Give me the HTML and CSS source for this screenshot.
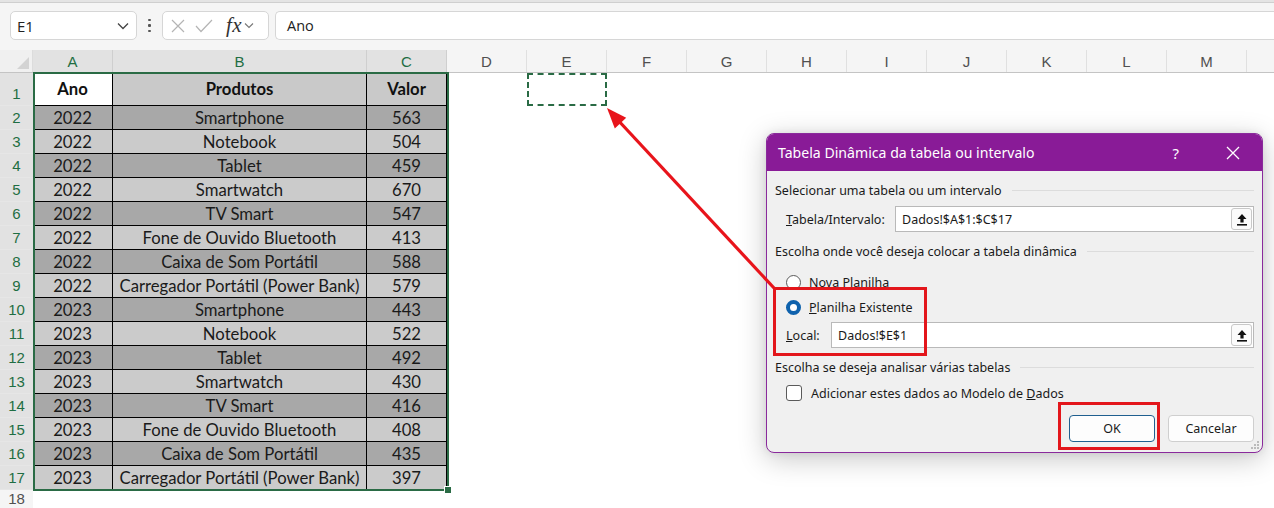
FILE: index.html
```html
<!DOCTYPE html>
<html lang="pt">
<head>
<meta charset="utf-8">
<title>Excel - Tabela Dinâmica</title>
<link rel="stylesheet" href="styles.css">
</head>
<body>
<div class="app">
  <div class="ribbon-edge"></div>
  <div class="formula-bar">
    <div class="name-box">
      <span class="name-val">E1</span>
      <svg class="chev" width="12" height="8" viewBox="0 0 12 8"><polyline points="1,1.5 6,6.5 11,1.5" fill="none" stroke="#444" stroke-width="1.3"/></svg>
    </div>
    <div class="vdots"><span></span><span></span><span></span></div>
    <div class="fx-box">
      <svg width="16" height="16" viewBox="0 0 16 16"><path d="M2 2 L14 14 M14 2 L2 14" stroke="#b4b4b4" stroke-width="1.2" fill="none"/></svg>
      <svg width="18" height="16" viewBox="0 0 18 16"><polyline points="1,8 6,13.5 17,2" stroke="#b4b4b4" stroke-width="1.2" fill="none"/></svg>
      <span class="fx">fx</span>
      <svg width="10" height="7" viewBox="0 0 10 7"><polyline points="1,1.5 5,5.5 9,1.5" fill="none" stroke="#777" stroke-width="1.1"/></svg>
    </div>
    <div class="formula-input">Ano</div>
  </div>

  <div class="sheet">
    <div class="row head-row">
      <div class="corner"><svg width="14" height="14" viewBox="0 0 14 14"><polygon points="13,1 13,13 1,13" fill="#d3d3d3"/></svg></div>
      <div class="ch sel">A</div><div class="ch sel">B</div><div class="ch sel">C</div>
      <div class="ch">D</div><div class="ch">E</div><div class="ch">F</div><div class="ch">G</div><div class="ch">H</div><div class="ch">I</div><div class="ch">J</div><div class="ch">K</div><div class="ch">L</div><div class="ch">M</div><div class="ch"></div>
    </div>

    <div class="row r1">
      <div class="rh sel">1</div>
      <div class="c hw b">Ano</div><div class="c hg b">Produtos</div><div class="c hg b">Valor</div>
      <div class="e"></div><div class="e marquee"></div>
    </div>
    <div class="row"><div class="rh sel">2</div><div class="c d">2022</div><div class="c d">Smartphone</div><div class="c d">563</div></div>
    <div class="row"><div class="rh sel">3</div><div class="c l">2022</div><div class="c l">Notebook</div><div class="c l">504</div></div>
    <div class="row"><div class="rh sel">4</div><div class="c d">2022</div><div class="c d">Tablet</div><div class="c d">459</div></div>
    <div class="row"><div class="rh sel">5</div><div class="c l">2022</div><div class="c l">Smartwatch</div><div class="c l">670</div></div>
    <div class="row"><div class="rh sel">6</div><div class="c d">2022</div><div class="c d">TV Smart</div><div class="c d">547</div></div>
    <div class="row"><div class="rh sel">7</div><div class="c l">2022</div><div class="c l">Fone de Ouvido Bluetooth</div><div class="c l">413</div></div>
    <div class="row"><div class="rh sel">8</div><div class="c d">2022</div><div class="c d">Caixa de Som Portátil</div><div class="c d">588</div></div>
    <div class="row"><div class="rh sel">9</div><div class="c l">2022</div><div class="c l">Carregador Portátil (Power Bank)</div><div class="c l">579</div></div>
    <div class="row"><div class="rh sel">10</div><div class="c d">2023</div><div class="c d">Smartphone</div><div class="c d">443</div></div>
    <div class="row"><div class="rh sel">11</div><div class="c l">2023</div><div class="c l">Notebook</div><div class="c l">522</div></div>
    <div class="row"><div class="rh sel">12</div><div class="c d">2023</div><div class="c d">Tablet</div><div class="c d">492</div></div>
    <div class="row"><div class="rh sel">13</div><div class="c l">2023</div><div class="c l">Smartwatch</div><div class="c l">430</div></div>
    <div class="row"><div class="rh sel">14</div><div class="c d">2023</div><div class="c d">TV Smart</div><div class="c d">416</div></div>
    <div class="row"><div class="rh sel">15</div><div class="c l">2023</div><div class="c l">Fone de Ouvido Bluetooth</div><div class="c l">408</div></div>
    <div class="row"><div class="rh sel">16</div><div class="c d">2023</div><div class="c d">Caixa de Som Portátil</div><div class="c d">435</div></div>
    <div class="row"><div class="rh sel">17</div><div class="c l">2023</div><div class="c l">Carregador Portátil (Power Bank)</div><div class="c l">397</div></div>
    <div class="row r18"><div class="rh">18</div></div>

    <div class="selection"><div class="handle"></div></div>
  </div>

  <div class="dialog">
    <div class="dlg-title">
      <span class="dlg-title-text">Tabela Dinâmica da tabela ou intervalo</span>
      <span class="dlg-help">?</span>
      <svg class="dlg-close" width="14" height="14" viewBox="0 0 14 14"><path d="M1 1 L13 13 M13 1 L1 13" stroke="#fff" stroke-width="1.3" fill="none"/></svg>
    </div>
    <div class="dlg-body">
      <div class="group-label"><span>Selecionar uma tabela ou um intervalo</span><i></i></div>
      <div class="field-row">
        <span class="field-label"><u>T</u>abela/Intervalo:</span>
        <div class="input w-range"><span>Dados!$A$1:$C$17</span>
          <span class="pick"><svg width="12" height="13" viewBox="0 0 12 13"><path d="M6 1 L10.5 6 H7.6 V9.5 H4.4 V6 H1.5 Z" fill="#111"/><rect x="1" y="11" width="10" height="1.6" fill="#111"/></svg></span>
        </div>
      </div>
      <div class="group-label g2"><span>Escolha onde você deseja colocar a tabela dinâmica</span><i></i></div>
      <div class="radio-row first"><span class="radio"></span><span>Nova Planilha</span></div>
      <div class="radio-row"><span class="radio on"></span><span><u>P</u>lanilha Existente</span></div>
      <div class="field-row local">
        <span class="field-label"><u>L</u>ocal:</span>
        <div class="input w-local"><span>Dados!$E$1</span>
          <span class="pick"><svg width="12" height="13" viewBox="0 0 12 13"><path d="M6 1 L10.5 6 H7.6 V9.5 H4.4 V6 H1.5 Z" fill="#111"/><rect x="1" y="11" width="10" height="1.6" fill="#111"/></svg></span>
        </div>
      </div>
      <div class="group-label g3"><span>Escolha se deseja analisar várias tabelas</span><i></i></div>
      <div class="check-row"><span class="checkbox"></span><span>Adicionar estes dados ao Modelo de <u>D</u>ados</span></div>
      <div class="buttons">
        <button class="btn primary">OK</button>
        <button class="btn">Cancelar</button>
      </div>
    </div>
    <svg class="grip" width="10" height="10" viewBox="0 0 10 10"><rect x="7" y="1" width="2" height="2" fill="#bbb"/><rect x="4" y="4" width="2" height="2" fill="#bbb"/><rect x="7" y="4" width="2" height="2" fill="#bbb"/><rect x="1" y="7" width="2" height="2" fill="#bbb"/><rect x="4" y="7" width="2" height="2" fill="#bbb"/><rect x="7" y="7" width="2" height="2" fill="#bbb"/></svg>
  </div>

  <svg class="arrow" width="1274" height="508" viewBox="0 0 1274 508">
    <line x1="774" y1="288" x2="616" y2="118" stroke="#e8141b" stroke-width="3.2"/>
    <polygon points="607,108 614.8,128.5 626.2,117.8" fill="#e8141b"/>
  </svg>
  <div class="hl hl-local"></div>
  <div class="hl hl-ok"></div>
</div>
</body>
</html>
```

FILE: styles.css
```css
* { box-sizing: border-box; }
html, body { margin: 0; padding: 0; }
body { width: 1274px; height: 508px; overflow: hidden; background: #fff; font-family: "Liberation Sans", Arial, sans-serif; }
.app { position: relative; width: 1274px; height: 508px; overflow: hidden; }

.ribbon-edge { height: 3px; background: #e4e4e4; border-bottom: 1px solid #cfcfcf; }
.formula-bar { height: 47px; background: #f5f5f5; display: flex; align-items: flex-start; padding: 8px 0 0 10px; }
.name-box { width: 127px; height: 29px; background: #fff; border: 1px solid #d6d6d6; border-radius: 5px; display: flex; align-items: center; justify-content: space-between; padding: 0 7px 0 6px; }
.name-val { font-family: "Open Sans", sans-serif; font-size: 15px; color: #222; }
.vdots { width: 25px; height: 29px; display: flex; flex-direction: column; align-items: center; justify-content: center; gap: 3px; }
.vdots span { width: 2.5px; height: 2.5px; background: #555; border-radius: 1px; }
.fx-box { width: 107px; height: 29px; background: #fff; border: 1px solid #d6d6d6; border-radius: 5px; display: flex; align-items: center; padding: 0 5px 0 7px; gap: 9px; }
.fx { font-family: "Liberation Serif", serif; font-style: italic; font-size: 21px; color: #333; margin-left: 4px; margin-right: -7px; letter-spacing: 0.5px; line-height: 1; }
.formula-input { flex: 1; margin-left: 6px; height: 29px; background: #fff; border: 1px solid #d6d6d6; border-right: none; border-radius: 5px 0 0 5px; font-family: "Open Sans", sans-serif; font-size: 14.5px; color: #222; padding: 4px 0 0 11px; }

.sheet { position: relative; }
.row { display: grid; grid-template-columns: 33px 80px 254px 80px 80px 80px 80px 80px 80px 80px 80px 80px 80px 80px 80px; height: 24px; }
.head-row { height: 23px; background: #f5f5f5; border-bottom: 1px solid #c4c4c4; }
.r1 { height: 33px; }
.corner { display: flex; align-items: flex-end; justify-content: flex-end; padding: 0 2px 2px 0; background: #f0f0f0; border-right: 1px solid #dcdcdc; }
.ch { display: flex; align-items: center; justify-content: center; font-family: "Liberation Sans", sans-serif; font-size: 15px; color: #505050; border-right: 1px solid #e0e0e0; }
.ch.sel { background: #e2e2e2; color: #1f6e43; border-right-color: #cfcfcf; }
.rh { display: flex; align-items: center; justify-content: center; font-family: "Liberation Sans", sans-serif; font-size: 15px; color: #505050; background: #f5f5f5; border-bottom: 1px solid #e6e6e6; }
.r1 .rh { align-items: flex-end; padding-bottom: 3px; }
.r18 .rh { align-items: flex-start; padding-top: 1px; line-height: 16px; }
.rh.sel { background: #e2e2e2; color: #1f6e43; }
.c { display: flex; align-items: center; justify-content: center; font-family: "Lato", sans-serif; font-size: 16.7px; color: #1a1a1a; border-right: 1px solid #000; border-bottom: 1px solid #000; white-space: nowrap; }
.c.b { font-weight: 700; color: #111; }
.hw { background: #fff; }
.hg { background: #c9c9c9; }
.d { background: #a8a8a8; }
.l { background: #cbcbcb; }
.marquee { border: 2px dashed #2a6b45; }

.selection { position: absolute; left: 33px; top: 22px; width: 416px; height: 419px; border: 2px solid #2a6b45; pointer-events: none; }
.handle { position: absolute; right: -5px; bottom: -5px; width: 6px; height: 6px; background: #2a6b45; border: 1px solid #fff; box-sizing: content-box; }

.dialog { position: absolute; left: 766px; top: 133px; width: 497px; height: 320px; background: #f0f0f0; border: 1px solid #8a2a9c; border-radius: 8px; box-shadow: 0 6px 28px rgba(0,0,0,0.22), 0 0 8px rgba(0,0,0,0.08); overflow: hidden; font-family: "Noto Sans", sans-serif; font-size: 12.5px; color: #1a1a1a; }
.dlg-title { height: 37px; background: #891b97; color: #fff; display: flex; align-items: center; padding: 0 0 0 11px; }
.dlg-title-text { font-size: 14.1px; flex: 1; }
.dlg-help { font-size: 15px; margin-right: 47px; }
.dlg-close { margin-right: 22px; }
.dlg-body { padding: 0 8px 0 8px; }
.group-label { display: flex; align-items: center; height: 18px; margin-top: 10px; }
.group-label i { flex: 1; height: 1px; background: #dcdcdc; margin-left: 10px; }
.field-row { display: flex; align-items: center; margin-top: 7px; padding-left: 11px; }
.field-label { width: 109px; }
.local .field-label { width: 45px; }
.field-row.local { margin-top: 5px; }
.input { height: 26px; background: #fff; border: 1px solid #b9b9b9; display: flex; align-items: center; justify-content: space-between; padding: 0 1px 0 6px; flex: 1; }
.pick { width: 21px; height: 22px; border: 1px solid #c8c8c8; border-radius: 3px; background: #fbfbfb; display: flex; align-items: center; justify-content: center; }
.radio-row { display: flex; align-items: center; height: 20px; margin-top: 5px; padding-left: 11px; gap: 8px; }
.radio-row.first { margin-top: 12px; }
.radio { width: 15px; height: 15px; border-radius: 50%; border: 1px solid #5a5a5a; background: #fff; }
.radio.on { border: 4.5px solid #0f62ad; background: #fff; }
.g3 { margin-top: 10px; }
.check-row { display: flex; align-items: center; height: 20px; margin-top: 7px; padding-left: 11px; gap: 9px; }
.checkbox { width: 16px; height: 16px; border: 1px solid #5a5a5a; border-radius: 3px; background: #fff; }
.buttons { display: flex; justify-content: flex-end; gap: 13px; margin-top: 12px; }
.btn { width: 86px; height: 27px; font-family: "Noto Sans", sans-serif; font-size: 12.5px; color: #1a1a1a; background: #fdfdfd; border: 1px solid #cfcfcf; border-radius: 4px; padding: 0; }
.btn.primary { border: 1px solid #1f5f8f; }
.grip { position: absolute; right: 2px; bottom: 2px; }

.arrow { position: absolute; left: 0; top: 0; pointer-events: none; }
.hl { position: absolute; border: 3px solid #e3161b; pointer-events: none; }
.hl-local { left: 773px; top: 287px; width: 154px; height: 69px; }
.hl-ok { left: 1058px; top: 402px; width: 102px; height: 48px; }
```
